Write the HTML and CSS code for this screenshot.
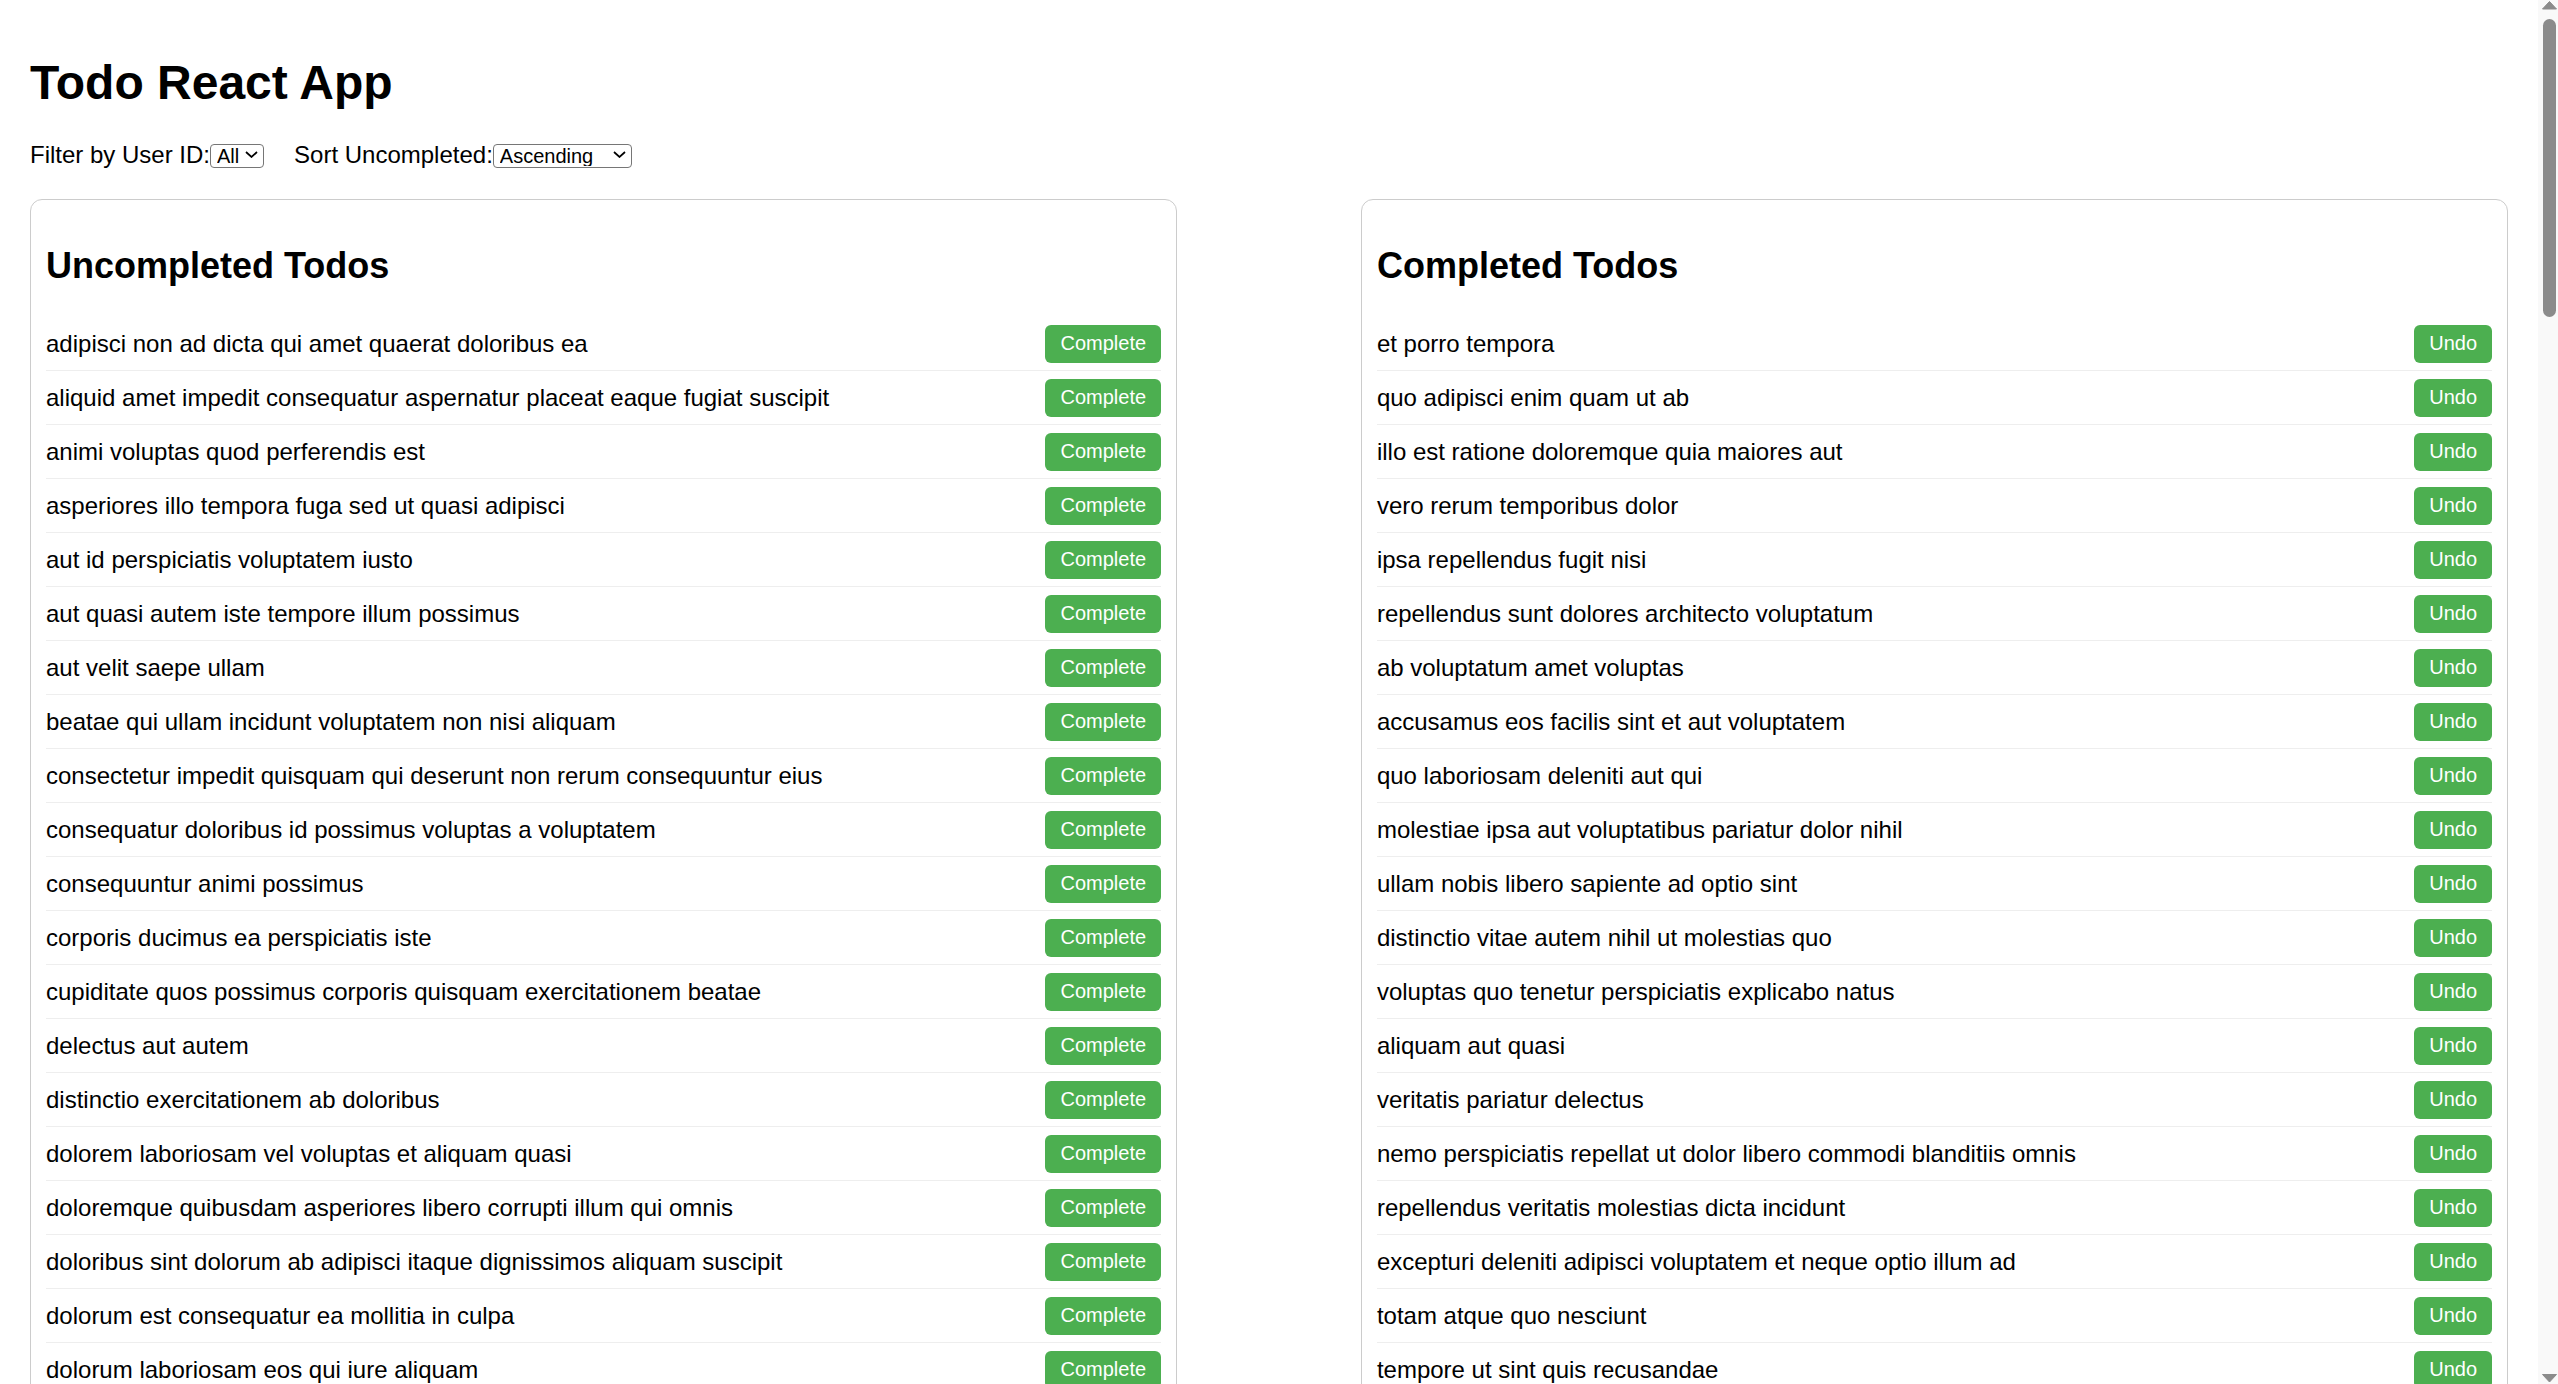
FILE: index.html
```html
<!DOCTYPE html>
<html lang="en">
<head>
<meta charset="utf-8">
<title>Todo React App</title>
<link rel="stylesheet" href="styles.css">
</head>
<body>
<div class="app">
  <h1 class="title">Todo React App</h1>
  <div class="filters">
    <label class="filter">Filter by User ID:<span class="select-wrap"><select class="select select-user"><option>All</option><option>1</option><option>2</option><option>3</option><option>4</option><option>5</option><option>6</option><option>7</option><option>8</option><option>9</option><option>10</option></select><svg class="chevron" viewBox="0 0 13 7" width="13" height="7"><path d="M1 1 L6.5 6 L12 1" fill="none" stroke="#000" stroke-width="1.7"/></svg></span></label>
    <label class="filter">Sort Uncompleted:<span class="select-wrap"><select class="select select-sort"><option>Ascending</option><option>Descending</option></select><svg class="chevron" viewBox="0 0 13 7" width="13" height="7"><path d="M1 1 L6.5 6 L12 1" fill="none" stroke="#000" stroke-width="1.7"/></svg></span></label>
  </div>
  <div class="lists">
    <section class="card">
      <h2 class="card-title">Uncompleted Todos</h2>
      <ul class="todo-list">
        <li class="todo-item"><span>adipisci non ad dicta qui amet quaerat doloribus ea</span><button class="btn">Complete</button></li>
        <li class="todo-item"><span>aliquid amet impedit consequatur aspernatur placeat eaque fugiat suscipit</span><button class="btn">Complete</button></li>
        <li class="todo-item"><span>animi voluptas quod perferendis est</span><button class="btn">Complete</button></li>
        <li class="todo-item"><span>asperiores illo tempora fuga sed ut quasi adipisci</span><button class="btn">Complete</button></li>
        <li class="todo-item"><span>aut id perspiciatis voluptatem iusto</span><button class="btn">Complete</button></li>
        <li class="todo-item"><span>aut quasi autem iste tempore illum possimus</span><button class="btn">Complete</button></li>
        <li class="todo-item"><span>aut velit saepe ullam</span><button class="btn">Complete</button></li>
        <li class="todo-item"><span>beatae qui ullam incidunt voluptatem non nisi aliquam</span><button class="btn">Complete</button></li>
        <li class="todo-item"><span>consectetur impedit quisquam qui deserunt non rerum consequuntur eius</span><button class="btn">Complete</button></li>
        <li class="todo-item"><span>consequatur doloribus id possimus voluptas a voluptatem</span><button class="btn">Complete</button></li>
        <li class="todo-item"><span>consequuntur animi possimus</span><button class="btn">Complete</button></li>
        <li class="todo-item"><span>corporis ducimus ea perspiciatis iste</span><button class="btn">Complete</button></li>
        <li class="todo-item"><span>cupiditate quos possimus corporis quisquam exercitationem beatae</span><button class="btn">Complete</button></li>
        <li class="todo-item"><span>delectus aut autem</span><button class="btn">Complete</button></li>
        <li class="todo-item"><span>distinctio exercitationem ab doloribus</span><button class="btn">Complete</button></li>
        <li class="todo-item"><span>dolorem laboriosam vel voluptas et aliquam quasi</span><button class="btn">Complete</button></li>
        <li class="todo-item"><span>doloremque quibusdam asperiores libero corrupti illum qui omnis</span><button class="btn">Complete</button></li>
        <li class="todo-item"><span>doloribus sint dolorum ab adipisci itaque dignissimos aliquam suscipit</span><button class="btn">Complete</button></li>
        <li class="todo-item"><span>dolorum est consequatur ea mollitia in culpa</span><button class="btn">Complete</button></li>
        <li class="todo-item"><span>dolorum laboriosam eos qui iure aliquam</span><button class="btn">Complete</button></li>
        <li class="todo-item"><span>ea aperiam consequatur qui repellat eos</span><button class="btn">Complete</button></li>
        <li class="todo-item"><span>earum doloribus ea doloremque quis</span><button class="btn">Complete</button></li>
        <li class="todo-item"><span>eos amet tempore laudantium fugit a</span><button class="btn">Complete</button></li>
        <li class="todo-item"><span>esse et quis iste est earum aut impedit</span><button class="btn">Complete</button></li>
        <li class="todo-item"><span>esse quas et quo quasi exercitationem</span><button class="btn">Complete</button></li>
        <li class="todo-item"><span>est dicta totam qui explicabo doloribus qui dignissimos</span><button class="btn">Complete</button></li>
        <li class="todo-item"><span>et doloremque nulla</span><button class="btn">Complete</button></li>
        <li class="todo-item"><span>et itaque necessitatibus maxime molestiae qui quas velit</span><button class="btn">Complete</button></li>
        <li class="todo-item"><span>et placeat et tempore aspernatur sint numquam</span><button class="btn">Complete</button></li>
        <li class="todo-item"><span>et placeat temporibus voluptas est tempora quos quibusdam</span><button class="btn">Complete</button></li>
        <li class="todo-item"><span>et praesentium aliquam est</span><button class="btn">Complete</button></li>
        <li class="todo-item"><span>et provident amet rerum consectetur et voluptatum</span><button class="btn">Complete</button></li>
        <li class="todo-item"><span>et quis minus quo a asperiores molestiae</span><button class="btn">Complete</button></li>
        <li class="todo-item"><span>eum non recusandae cupiditate animi</span><button class="btn">Complete</button></li>
        <li class="todo-item"><span>excepturi a et neque qui expedita vel voluptate</span><button class="btn">Complete</button></li>
        <li class="todo-item"><span>excepturi non laudantium quo</span><button class="btn">Complete</button></li>
        <li class="todo-item"><span>expedita tempore nobis eveniet laborum maiores</span><button class="btn">Complete</button></li>
        <li class="todo-item"><span>explicabo enim cumque porro aperiam occaecati minima</span><button class="btn">Complete</button></li>
        <li class="todo-item"><span>explicabo odio est et</span><button class="btn">Complete</button></li>
        <li class="todo-item"><span>facilis modi saepe mollitia</span><button class="btn">Complete</button></li>
        <li class="todo-item"><span>fugiat pariatur ratione ut asperiores necessitatibus magni</span><button class="btn">Complete</button></li>
        <li class="todo-item"><span>fugiat perferendis sed aut quidem</span><button class="btn">Complete</button></li>
        <li class="todo-item"><span>fugiat veniam minus</span><button class="btn">Complete</button></li>
        <li class="todo-item"><span>harum ad aperiam quis</span><button class="btn">Complete</button></li>
        <li class="todo-item"><span>illo expedita consequatur quia in</span><button class="btn">Complete</button></li>
        <li class="todo-item"><span>ipsam aperiam voluptates qui</span><button class="btn">Complete</button></li>
        <li class="todo-item"><span>laboriosam mollitia et enim quasi adipisci quia provident illum</span><button class="btn">Complete</button></li>
        <li class="todo-item"><span>laborum aut in quam</span><button class="btn">Complete</button></li>
        <li class="todo-item"><span>magni accusantium labore et id quis provident</span><button class="btn">Complete</button></li>
        <li class="todo-item"><span>magni soluta corrupti ut maiores rem quidem</span><button class="btn">Complete</button></li>
        <li class="todo-item"><span>maiores aut nesciunt delectus exercitationem vel assumenda eligendi at</span><button class="btn">Complete</button></li>
        <li class="todo-item"><span>molestiae perspiciatis ipsa</span><button class="btn">Complete</button></li>
        <li class="todo-item"><span>molestias modi perferendis perspiciatis</span><button class="btn">Complete</button></li>
        <li class="todo-item"><span>nam qui rerum fugiat accusamus</span><button class="btn">Complete</button></li>
        <li class="todo-item"><span>natus corrupti maxime laudantium et voluptatem laboriosam odit</span><button class="btn">Complete</button></li>
        <li class="todo-item"><span>neque voluptates ratione</span><button class="btn">Complete</button></li>
        <li class="todo-item"><span>nesciunt dolorum quis recusandae ad pariatur ratione</span><button class="btn">Complete</button></li>
        <li class="todo-item"><span>nesciunt totam sit blanditiis sit</span><button class="btn">Complete</button></li>
        <li class="todo-item"><span>nihil ut tempore placeat</span><button class="btn">Complete</button></li>
        <li class="todo-item"><span>nobis suscipit ducimus enim asperiores voluptas</span><button class="btn">Complete</button></li>
        <li class="todo-item"><span>non sunt delectus illo nulla tenetur enim omnis</span><button class="btn">Complete</button></li>
        <li class="todo-item"><span>occaecati adipisci est possimus totam</span><button class="btn">Complete</button></li>
        <li class="todo-item"><span>odit eligendi recusandae doloremque cumque non</span><button class="btn">Complete</button></li>
        <li class="todo-item"><span>pariatur et magnam ea doloribus similique voluptatem rerum quia</span><button class="btn">Complete</button></li>
        <li class="todo-item"><span>perspiciatis velit id laborum placeat iusto et aliquam odio</span><button class="btn">Complete</button></li>
        <li class="todo-item"><span>porro aut necessitatibus eaque distinctio</span><button class="btn">Complete</button></li>
        <li class="todo-item"><span>praesentium facilis facere quis harum voluptatibus voluptatem eum</span><button class="btn">Complete</button></li>
        <li class="todo-item"><span>praesentium facilis omnis laudantium fugit ad iusto nihil nesciunt</span><button class="btn">Complete</button></li>
        <li class="todo-item"><span>quasi et eius ipsam</span><button class="btn">Complete</button></li>
        <li class="todo-item"><span>qui consectetur id</span><button class="btn">Complete</button></li>
        <li class="todo-item"><span>qui labore est occaecati recusandae aliquid quam</span><button class="btn">Complete</button></li>
        <li class="todo-item"><span>qui ullam ratione quibusdam voluptatem quia omnis</span><button class="btn">Complete</button></li>
        <li class="todo-item"><span>quia atque aliquam sunt impedit voluptatum rerum assumenda nisi</span><button class="btn">Complete</button></li>
        <li class="todo-item"><span>quia modi consequatur vero fugiat</span><button class="btn">Complete</button></li>
        <li class="todo-item"><span>quia voluptatibus voluptatem quos similique maiores repellat</span><button class="btn">Complete</button></li>
        <li class="todo-item"><span>quis ut nam facilis et officia qui</span><button class="btn">Complete</button></li>
        <li class="todo-item"><span>quisquam aliquam quia doloribus aut</span><button class="btn">Complete</button></li>
        <li class="todo-item"><span>quo necessitatibus quidem nisi</span><button class="btn">Complete</button></li>
        <li class="todo-item"><span>quos quo possimus suscipit minima ut</span><button class="btn">Complete</button></li>
        <li class="todo-item"><span>recusandae quia qui sunt libero</span><button class="btn">Complete</button></li>
        <li class="todo-item"><span>reiciendis est magnam amet nemo iste recusandae impedit quaerat</span><button class="btn">Complete</button></li>
        <li class="todo-item"><span>reprehenderit quos aut aut consequatur est sed</span><button class="btn">Complete</button></li>
        <li class="todo-item"><span>repudiandae sint omnis</span><button class="btn">Complete</button></li>
        <li class="todo-item"><span>repudiandae totam in est sint facere fuga</span><button class="btn">Complete</button></li>
        <li class="todo-item"><span>rerum eum molestias autem voluptatum sit optio</span><button class="btn">Complete</button></li>
        <li class="todo-item"><span>rerum perferendis error quia ut eveniet</span><button class="btn">Complete</button></li>
        <li class="todo-item"><span>sed ab consequatur</span><button class="btn">Complete</button></li>
        <li class="todo-item"><span>sed et ea eum</span><button class="btn">Complete</button></li>
        <li class="todo-item"><span>sed ut vero sit molestiae</span><button class="btn">Complete</button></li>
        <li class="todo-item"><span>sequi quae est et qui qui eveniet asperiores</span><button class="btn">Complete</button></li>
        <li class="todo-item"><span>similique aut quo</span><button class="btn">Complete</button></li>
        <li class="todo-item"><span>sint sit aut vero</span><button class="btn">Complete</button></li>
        <li class="todo-item"><span>sit reprehenderit omnis quia</span><button class="btn">Complete</button></li>
        <li class="todo-item"><span>sunt cum tempora</span><button class="btn">Complete</button></li>
        <li class="todo-item"><span>sunt veritatis ut voluptate</span><button class="btn">Complete</button></li>
        <li class="todo-item"><span>suscipit repellat esse quibusdam voluptatem incidunt</span><button class="btn">Complete</button></li>
        <li class="todo-item"><span>totam quia non</span><button class="btn">Complete</button></li>
        <li class="todo-item"><span>ut cupiditate sequi aliquam fuga maiores</span><button class="btn">Complete</button></li>
        <li class="todo-item"><span>ut eum exercitationem sint</span><button class="btn">Complete</button></li>
        <li class="todo-item"><span>ut in est quis</span><button class="btn">Complete</button></li>
        <li class="todo-item"><span>ut necessitatibus aut maiores debitis officia blanditiis velit et</span><button class="btn">Complete</button></li>
        <li class="todo-item"><span>ut quas possimus exercitationem sint voluptates</span><button class="btn">Complete</button></li>
        <li class="todo-item"><span>ut sequi accusantium et mollitia delectus sunt</span><button class="btn">Complete</button></li>
        <li class="todo-item"><span>vel voluptatem repellat nihil placeat corporis</span><button class="btn">Complete</button></li>
        <li class="todo-item"><span>velit soluta adipisci molestias reiciendis harum</span><button class="btn">Complete</button></li>
        <li class="todo-item"><span>vitae aut excepturi laboriosam sint aliquam et et accusantium</span><button class="btn">Complete</button></li>
        <li class="todo-item"><span>voluptas consequatur qui ut quia magnam nemo esse</span><button class="btn">Complete</button></li>
        <li class="todo-item"><span>voluptas est vero</span><button class="btn">Complete</button></li>
        <li class="todo-item"><span>voluptatem et ut modi</span><button class="btn">Complete</button></li>
        <li class="todo-item"><span>voluptates eum voluptas et dicta</span><button class="btn">Complete</button></li>
      </ul>
    </section>
    <section class="card">
      <h2 class="card-title">Completed Todos</h2>
      <ul class="todo-list">
        <li class="todo-item"><span>et porro tempora</span><button class="btn">Undo</button></li>
        <li class="todo-item"><span>quo adipisci enim quam ut ab</span><button class="btn">Undo</button></li>
        <li class="todo-item"><span>illo est ratione doloremque quia maiores aut</span><button class="btn">Undo</button></li>
        <li class="todo-item"><span>vero rerum temporibus dolor</span><button class="btn">Undo</button></li>
        <li class="todo-item"><span>ipsa repellendus fugit nisi</span><button class="btn">Undo</button></li>
        <li class="todo-item"><span>repellendus sunt dolores architecto voluptatum</span><button class="btn">Undo</button></li>
        <li class="todo-item"><span>ab voluptatum amet voluptas</span><button class="btn">Undo</button></li>
        <li class="todo-item"><span>accusamus eos facilis sint et aut voluptatem</span><button class="btn">Undo</button></li>
        <li class="todo-item"><span>quo laboriosam deleniti aut qui</span><button class="btn">Undo</button></li>
        <li class="todo-item"><span>molestiae ipsa aut voluptatibus pariatur dolor nihil</span><button class="btn">Undo</button></li>
        <li class="todo-item"><span>ullam nobis libero sapiente ad optio sint</span><button class="btn">Undo</button></li>
        <li class="todo-item"><span>distinctio vitae autem nihil ut molestias quo</span><button class="btn">Undo</button></li>
        <li class="todo-item"><span>voluptas quo tenetur perspiciatis explicabo natus</span><button class="btn">Undo</button></li>
        <li class="todo-item"><span>aliquam aut quasi</span><button class="btn">Undo</button></li>
        <li class="todo-item"><span>veritatis pariatur delectus</span><button class="btn">Undo</button></li>
        <li class="todo-item"><span>nemo perspiciatis repellat ut dolor libero commodi blanditiis omnis</span><button class="btn">Undo</button></li>
        <li class="todo-item"><span>repellendus veritatis molestias dicta incidunt</span><button class="btn">Undo</button></li>
        <li class="todo-item"><span>excepturi deleniti adipisci voluptatem et neque optio illum ad</span><button class="btn">Undo</button></li>
        <li class="todo-item"><span>totam atque quo nesciunt</span><button class="btn">Undo</button></li>
        <li class="todo-item"><span>tempore ut sint quis recusandae</span><button class="btn">Undo</button></li>
        <li class="todo-item"><span>cum debitis quis accusamus doloremque ipsa natus sapiente omnis</span><button class="btn">Undo</button></li>
        <li class="todo-item"><span>cupiditate necessitatibus ullam aut quis dolor voluptate</span><button class="btn">Undo</button></li>
        <li class="todo-item"><span>quis et est ut voluptate quam dolor</span><button class="btn">Undo</button></li>
        <li class="todo-item"><span>voluptatum omnis minima qui occaecati provident nulla voluptatem ratione</span><button class="btn">Undo</button></li>
        <li class="todo-item"><span>deleniti ea temporibus enim</span><button class="btn">Undo</button></li>
        <li class="todo-item"><span>et sequi qui architecto ut adipisci</span><button class="btn">Undo</button></li>
        <li class="todo-item"><span>odit optio omnis qui sunt</span><button class="btn">Undo</button></li>
        <li class="todo-item"><span>doloremque aut dolores quidem fuga qui nulla</span><button class="btn">Undo</button></li>
        <li class="todo-item"><span>sint amet quia totam corporis qui exercitationem commodi</span><button class="btn">Undo</button></li>
        <li class="todo-item"><span>sequi dolorem sed</span><button class="btn">Undo</button></li>
        <li class="todo-item"><span>eum ipsa maxime ut</span><button class="btn">Undo</button></li>
        <li class="todo-item"><span>tempore molestias dolores rerum sequi voluptates ipsum consequatur</span><button class="btn">Undo</button></li>
        <li class="todo-item"><span>suscipit qui totam</span><button class="btn">Undo</button></li>
        <li class="todo-item"><span>quidem at rerum quis ex aut sit quam</span><button class="btn">Undo</button></li>
        <li class="todo-item"><span>et quia ad iste a</span><button class="btn">Undo</button></li>
        <li class="todo-item"><span>incidunt ut saepe autem</span><button class="btn">Undo</button></li>
        <li class="todo-item"><span>laudantium quae eligendi consequatur quia et vero autem</span><button class="btn">Undo</button></li>
        <li class="todo-item"><span>sequi ut omnis et</span><button class="btn">Undo</button></li>
        <li class="todo-item"><span>molestiae nisi accusantium tenetur dolorem et</span><button class="btn">Undo</button></li>
        <li class="todo-item"><span>nulla quis consequatur saepe qui id expedita</span><button class="btn">Undo</button></li>
        <li class="todo-item"><span>in omnis laboriosam</span><button class="btn">Undo</button></li>
        <li class="todo-item"><span>odio iure consequatur molestiae quibusdam necessitatibus quia sint</span><button class="btn">Undo</button></li>
        <li class="todo-item"><span>vel nihil et molestiae iusto assumenda nemo quo ut</span><button class="btn">Undo</button></li>
        <li class="todo-item"><span>debitis accusantium ut quo facilis nihil quis sapiente necessitatibus</span><button class="btn">Undo</button></li>
        <li class="todo-item"><span>totam quia dolorem et illum repellat voluptas optio</span><button class="btn">Undo</button></li>
        <li class="todo-item"><span>ad illo quis voluptatem temporibus</span><button class="btn">Undo</button></li>
        <li class="todo-item"><span>a eos eaque nihil et exercitationem incidunt delectus</span><button class="btn">Undo</button></li>
        <li class="todo-item"><span>autem temporibus harum quisquam in culpa</span><button class="btn">Undo</button></li>
        <li class="todo-item"><span>aut aut ea corporis</span><button class="btn">Undo</button></li>
        <li class="todo-item"><span>ipsa dolores vel facilis ut</span><button class="btn">Undo</button></li>
        <li class="todo-item"><span>inventore aut nihil minima laudantium hic qui omnis</span><button class="btn">Undo</button></li>
        <li class="todo-item"><span>provident aut nobis culpa</span><button class="btn">Undo</button></li>
        <li class="todo-item"><span>ut asperiores perspiciatis veniam ipsum rerum saepe</span><button class="btn">Undo</button></li>
        <li class="todo-item"><span>voluptates dignissimos sed doloribus animi quaerat aut</span><button class="btn">Undo</button></li>
        <li class="todo-item"><span>explicabo consectetur debitis voluptates quas quae culpa rerum non</span><button class="btn">Undo</button></li>
        <li class="todo-item"><span>maiores accusantium architecto necessitatibus reiciendis ea aut</span><button class="btn">Undo</button></li>
        <li class="todo-item"><span>molestiae suscipit ratione nihil odio libero impedit vero totam</span><button class="btn">Undo</button></li>
        <li class="todo-item"><span>eum itaque quod reprehenderit et facilis dolor autem ut</span><button class="btn">Undo</button></li>
        <li class="todo-item"><span>accusamus adipisci dicta qui quo ea explicabo sed vero</span><button class="btn">Undo</button></li>
        <li class="todo-item"><span>rerum non ex sapiente</span><button class="btn">Undo</button></li>
        <li class="todo-item"><span>voluptatem nobis consequatur et assumenda magnam</span><button class="btn">Undo</button></li>
        <li class="todo-item"><span>nam quia quia nulla repellat assumenda quibusdam sit nobis</span><button class="btn">Undo</button></li>
        <li class="todo-item"><span>dolorem veniam quisquam deserunt repellendus</span><button class="btn">Undo</button></li>
        <li class="todo-item"><span>debitis vitae delectus et harum accusamus aut deleniti a</span><button class="btn">Undo</button></li>
        <li class="todo-item"><span>debitis adipisci quibusdam aliquam sed dolore ea praesentium nobis</span><button class="btn">Undo</button></li>
        <li class="todo-item"><span>ex hic consequuntur earum omnis alias ut occaecati culpa</span><button class="btn">Undo</button></li>
        <li class="todo-item"><span>omnis laboriosam molestias animi sunt dolore</span><button class="btn">Undo</button></li>
        <li class="todo-item"><span>ea odio perferendis officiis</span><button class="btn">Undo</button></li>
        <li class="todo-item"><span>fugiat aut voluptatibus corrupti deleniti velit iste odio</span><button class="btn">Undo</button></li>
        <li class="todo-item"><span>laudantium eius officia perferendis provident perspiciatis asperiores</span><button class="btn">Undo</button></li>
        <li class="todo-item"><span>nesciunt itaque commodi tempore</span><button class="btn">Undo</button></li>
        <li class="todo-item"><span>omnis consequuntur cupiditate impedit itaque ipsam quo</span><button class="btn">Undo</button></li>
        <li class="todo-item"><span>debitis nisi et dolorem repellat et</span><button class="btn">Undo</button></li>
        <li class="todo-item"><span>inventore saepe cumque et aut illum enim</span><button class="btn">Undo</button></li>
        <li class="todo-item"><span>omnis nulla eum aliquam distinctio</span><button class="btn">Undo</button></li>
        <li class="todo-item"><span>vel non beatae est</span><button class="btn">Undo</button></li>
        <li class="todo-item"><span>culpa eius et voluptatem et</span><button class="btn">Undo</button></li>
        <li class="todo-item"><span>accusamus sint iusto et voluptatem exercitationem</span><button class="btn">Undo</button></li>
        <li class="todo-item"><span>temporibus atque distinctio omnis eius impedit tempore molestias pariatur</span><button class="btn">Undo</button></li>
        <li class="todo-item"><span>rerum debitis voluptatem qui eveniet tempora distinctio a</span><button class="btn">Undo</button></li>
        <li class="todo-item"><span>rerum ex veniam mollitia voluptatibus pariatur</span><button class="btn">Undo</button></li>
        <li class="todo-item"><span>consequuntur aut ut fugit similique</span><button class="btn">Undo</button></li>
        <li class="todo-item"><span>dignissimos quo nobis earum saepe</span><button class="btn">Undo</button></li>
        <li class="todo-item"><span>quis eius est sint explicabo</span><button class="btn">Undo</button></li>
        <li class="todo-item"><span>numquam repellendus a magnam</span><button class="btn">Undo</button></li>
      </ul>
    </section>
  </div>
</div>
<div class="scrollbar" aria-hidden="true">
  <svg class="scroll-arrow" viewBox="0 0 20 19" width="20" height="19"><polygon points="4.5,9 11.5,1.5 18.5,9" fill="#8b8b8b" stroke="#8b8b8b" stroke-width="1" stroke-linejoin="round"/></svg>
  <div class="scroll-thumb"></div>
  <svg class="scroll-arrow scroll-arrow-down" viewBox="0 0 20 19" width="20" height="19"><polygon points="4.5,9.5 18.5,9.5 11.5,17" fill="#8b8b8b" stroke="#8b8b8b" stroke-width="1" stroke-linejoin="round"/></svg>
</div>
</body>
</html>
```

FILE: styles.css
```css
html {
  background: #fff;
}

body {
  margin: 0;
  font-family: "Liberation Sans", Arial, sans-serif;
  font-size: 24px;
  color: #000;
  background: #fff;
}

.app {
  padding: 23px 30px 12px;
  margin-right: 20px;
}

.title {
  font-size: 48px;
  font-weight: bold;
  line-height: normal;
  margin: 32px 0 31px;
}

.filters {
  display: flex;
  align-items: baseline;
  gap: 30px;
  margin-bottom: 30px;
}

.filter {
  display: inline-flex;
  align-items: baseline;
}

.select-wrap {
  position: relative;
  display: inline-block;
}

.select {
  -webkit-appearance: none;
  appearance: none;
  font-family: "Liberation Sans", Arial, sans-serif;
  font-size: 20px;
  color: #000;
  background: #fff;
  height: 24px;
  border: 1px solid #767676;
  border-radius: 4px;
  padding: 0 0 0 6px;
  margin: 0;
  line-height: 20px;
}

.select-user {
  width: 54px;
}

.select-sort {
  width: 139px;
}

.chevron {
  position: absolute;
  right: 6px;
  top: 50%;
  margin-top: -4px;
  pointer-events: none;
}

.lists {
  display: flex;
  justify-content: space-between;
}

.card {
  width: 45%;
  padding: 15px;
  border: 1px solid #ccc;
  border-radius: 12px;
}

.card-title {
  font-size: 36px;
  font-weight: bold;
  line-height: normal;
  margin: 30px 0;
}

.todo-list {
  list-style: none;
  margin: 0;
  padding: 0;
}

.todo-item {
  display: flex;
  justify-content: space-between;
  align-items: center;
  padding: 7.5px 0;
  border-bottom: 1px solid #eee;
}

.btn {
  font-family: "Liberation Sans", Arial, sans-serif;
  font-size: 20px;
  line-height: normal;
  color: #fff;
  background: #4caf50;
  border: none;
  border-radius: 6px;
  padding: 7.5px 15px;
  margin: 0;
  cursor: pointer;
}

.scrollbar {
  position: fixed;
  top: 0;
  right: 0;
  width: 20px;
  height: 100vh;
  background: #f9f9f9;
  display: flex;
  flex-direction: column;
}

.scroll-arrow {
  display: block;
  flex: none;
}

.scroll-thumb {
  flex: none;
  width: 13px;
  height: 298px;
  margin-left: 5px;
  border-radius: 7px;
  background: #8b8b8b;
}

.scroll-arrow-down {
  margin-top: auto;
}
```
